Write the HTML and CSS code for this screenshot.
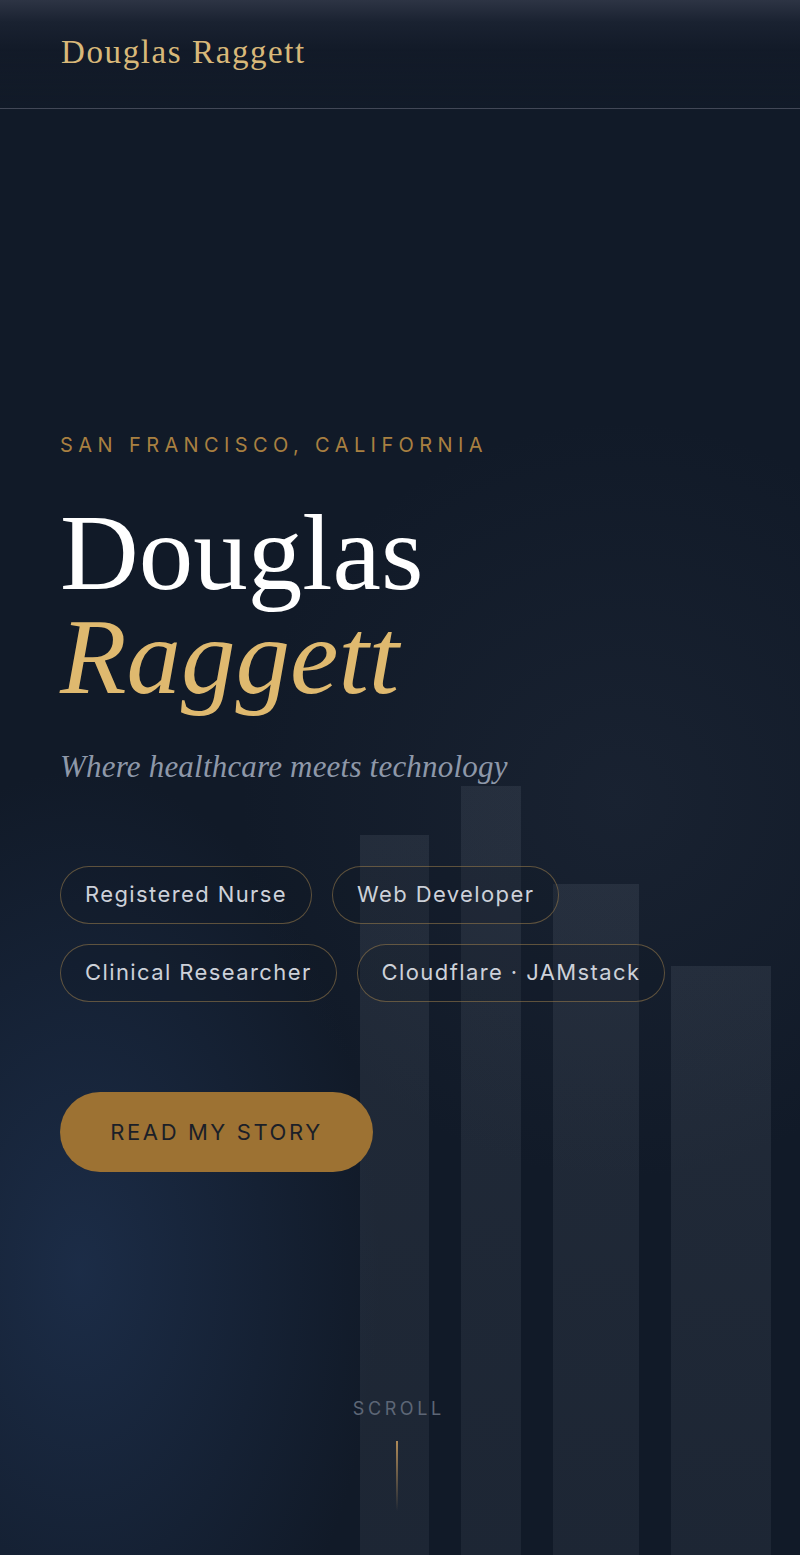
FILE: index.html
```html
<!DOCTYPE html>
<html lang="en">
<head>
<meta charset="utf-8">
<title>Douglas Raggett</title>
<link rel="stylesheet" href="styles.css">
</head>
<body>
<div class="page">
  <header class="site-header">
    <a class="brand" href="#">Douglas Raggett</a>
  </header>
  <main class="hero">
    <div class="bars" aria-hidden="true">
      <span class="bar" style="width:69px;height:720px"></span>
      <span class="bar" style="width:60px;height:769px"></span>
      <span class="bar" style="width:86px;height:671px"></span>
      <span class="bar" style="width:100px;height:589px"></span>
    </div>
    <div class="hero-content">
      <p class="location">San Francisco, California</p>
      <h1 class="name">Douglas<br><em>Raggett</em></h1>
      <p class="tagline">Where healthcare meets technology</p>
      <ul class="pills">
        <li class="pill">Registered Nurse</li>
        <li class="pill">Web Developer</li>
        <li class="pill">Clinical Researcher</li>
        <li class="pill">Cloudflare · JAMstack</li>
      </ul>
      <a class="cta" href="#">Read My Story</a>
    </div>
    <div class="scroll">
      <span class="scroll-label">Scroll</span>
      <span class="scroll-line"></span>
    </div>
  </main>
</div>
</body>
</html>
```
FILE: styles.css
```css
* { box-sizing: border-box; }
html, body { margin: 0; padding: 0; }
body {
  background: #111a28;
  font-family: Inter, "DejaVu Sans", sans-serif;
  color: #cfd3da;
}
.page {
  position: relative;
  min-height: 1555px;
  overflow: hidden;
  background:
    radial-gradient(ellipse 300px 500px at 80px 1270px, rgba(32,52,84,0.7), rgba(32,52,84,0) 100%),
    radial-gradient(circle 380px at 620px 800px, rgba(60,70,90,0.18), rgba(60,70,90,0) 100%),
    #111a28;
}
.site-header {
  height: 109px;
  display: flex;
  align-items: center;
  padding: 0 61px 4px;
  border-bottom: 1px solid rgba(255,255,255,0.1);
  background: linear-gradient(180deg, #2d3444 0px, #1a2231 22px, #121a28 50px, rgba(17,26,40,0) 109px);
  position: relative;
  z-index: 2;
}
.brand {
  font-family: "Liberation Serif", serif;
  font-size: 33px;
  color: #d8b879;
  text-decoration: none;
  letter-spacing: 1.6px;
}
.hero {
  position: relative;
  min-height: 1446px;
}
.bars {
  position: absolute;
  left: 360px;
  bottom: 0;
  display: flex;
  align-items: flex-end;
  gap: 32px;
  z-index: 0;
}
.bar {
  display: block;
  background: linear-gradient(180deg, rgba(150,160,175,0.12), rgba(150,160,175,0.09));
}
.hero-content {
  position: relative;
  z-index: 1;
  padding: 324px 60px 0;
}
.location {
  margin: 0;
  font-size: 20px;
  line-height: 24px;
  letter-spacing: 0.27em;
  text-transform: uppercase;
  color: #a98041;
}
.name {
  margin: 44px 0 0;
  font-family: "Liberation Serif", serif;
  font-weight: 400;
  font-size: 109px;
  line-height: 104px;
  color: #ffffff;
  letter-spacing: 0;
}
.name em {
  font-style: italic;
  color: #dfb96f;
}
.tagline {
  margin: 38px 0 0;
  font-family: "Liberation Serif", serif;
  font-style: italic;
  font-size: 31px;
  line-height: 40px;
  letter-spacing: 0.2px;
  color: #8e98a9;
}
.pills {
  list-style: none;
  margin: 79px 0 0;
  padding: 0;
  display: flex;
  flex-wrap: wrap;
  gap: 20px;
  max-width: 640px;
}
.pill {
  height: 58px;
  display: flex;
  align-items: center;
  padding: 0 24px 2px;
  border: 1.5px solid rgba(170,135,80,0.5);
  border-radius: 29px;
  font-size: 22px;
  letter-spacing: 1.4px;
  color: #cdd1d9;
  background: rgba(15,23,36,0.25);
}
.cta {
  margin-top: 90px;
  display: inline-flex;
  align-items: center;
  justify-content: center;
  height: 80px;
  width: 313px;
  border-radius: 40px;
  background: #9d7233;
  color: #1b1f28;
  font-size: 22px;
  letter-spacing: 2.6px;
  text-transform: uppercase;
  text-decoration: none;
}
.scroll {
  position: absolute;
  left: 0;
  right: 0;
  bottom: 44px;
  display: flex;
  flex-direction: column;
  align-items: center;
  gap: 22px;
  z-index: 1;
}
.scroll-label {
  font-size: 18px;
  letter-spacing: 0.2em;
  text-transform: uppercase;
  color: #5d6676;
  padding-left: 0.2em;
  margin-left: -6px;
}
.scroll-line {
  display: block;
  width: 1.5px;
  height: 70px;
  margin-left: -6px;
  background: linear-gradient(180deg, #b08b58, rgba(176,139,88,0));
}
```
